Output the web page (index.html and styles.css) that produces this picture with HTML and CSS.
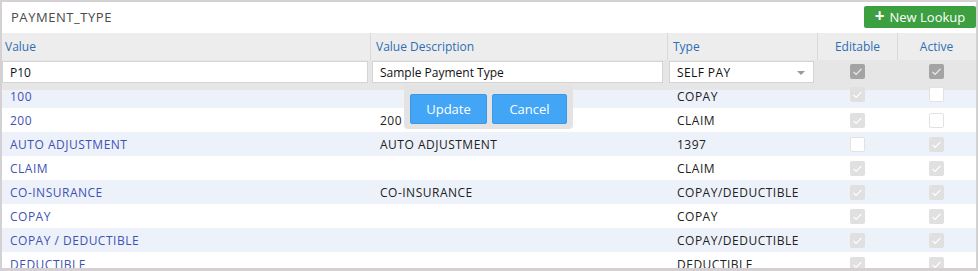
FILE: index.html
```html
<!DOCTYPE html>
<html lang="en">

<head>
    <meta charset="UTF-8">
    <title>Lookups</title>
    <link rel="stylesheet" href="styles.css">
</head>

<body>
    <div class="panel">
        <div class="toolbar">
            <span class="title">PAYMENT_TYPE</span>
            <button class="btn_new"><span class="plus">+</span>New Lookup</button>
        </div>

        <div class="row head">
            <div class="cell">Value</div>
            <div class="cell">Value Description</div>
            <div class="cell">Type</div>
            <div class="cell center">Editable</div>
            <div class="cell center">Active</div>
        </div>

        <div class="row edit">
            <div class="cell"><input class="field" type="text" value="P10"></div>
            <div class="cell"><input class="field" type="text" value="Sample Payment Type"></div>
            <div class="cell"><div class="field select">SELF PAY<span class="caret"></span></div></div>
            <div class="cell center"><span class="chk dark"><svg viewBox="0 0 15 15"><path d="M3.5 7.8l2.6 2.6 5.4-5.6" /></svg></span></div>
            <div class="cell center"><span class="chk dark"><svg viewBox="0 0 15 15"><path d="M3.5 7.8l2.6 2.6 5.4-5.6" /></svg></span></div>
        </div>

        <div class="rows">
            <div class="row data odd first">
                <div class="cell link">100</div>
                <div class="cell"></div>
                <div class="cell">COPAY</div>
                <div class="cell center"><span class="chk on"><svg viewBox="0 0 15 15"><path d="M3.5 7.8l2.6 2.6 5.4-5.6" /></svg></span></div>
                <div class="cell center"><span class="chk off"></span></div>
            </div>
            <div class="row data">
                <div class="cell link">200</div>
                <div class="cell">200</div>
                <div class="cell">CLAIM</div>
                <div class="cell center"><span class="chk on"><svg viewBox="0 0 15 15"><path d="M3.5 7.8l2.6 2.6 5.4-5.6" /></svg></span></div>
                <div class="cell center"><span class="chk off"></span></div>
            </div>
            <div class="row data odd">
                <div class="cell link">AUTO ADJUSTMENT</div>
                <div class="cell">AUTO ADJUSTMENT</div>
                <div class="cell">1397</div>
                <div class="cell center"><span class="chk off"></span></div>
                <div class="cell center"><span class="chk on"><svg viewBox="0 0 15 15"><path d="M3.5 7.8l2.6 2.6 5.4-5.6" /></svg></span></div>
            </div>
            <div class="row data">
                <div class="cell link">CLAIM</div>
                <div class="cell"></div>
                <div class="cell">CLAIM</div>
                <div class="cell center"><span class="chk on"><svg viewBox="0 0 15 15"><path d="M3.5 7.8l2.6 2.6 5.4-5.6" /></svg></span></div>
                <div class="cell center"><span class="chk on"><svg viewBox="0 0 15 15"><path d="M3.5 7.8l2.6 2.6 5.4-5.6" /></svg></span></div>
            </div>
            <div class="row data odd">
                <div class="cell link">CO-INSURANCE</div>
                <div class="cell">CO-INSURANCE</div>
                <div class="cell">COPAY/DEDUCTIBLE</div>
                <div class="cell center"><span class="chk on"><svg viewBox="0 0 15 15"><path d="M3.5 7.8l2.6 2.6 5.4-5.6" /></svg></span></div>
                <div class="cell center"><span class="chk on"><svg viewBox="0 0 15 15"><path d="M3.5 7.8l2.6 2.6 5.4-5.6" /></svg></span></div>
            </div>
            <div class="row data">
                <div class="cell link">COPAY</div>
                <div class="cell"></div>
                <div class="cell">COPAY</div>
                <div class="cell center"><span class="chk on"><svg viewBox="0 0 15 15"><path d="M3.5 7.8l2.6 2.6 5.4-5.6" /></svg></span></div>
                <div class="cell center"><span class="chk on"><svg viewBox="0 0 15 15"><path d="M3.5 7.8l2.6 2.6 5.4-5.6" /></svg></span></div>
            </div>
            <div class="row data odd">
                <div class="cell link">COPAY / DEDUCTIBLE</div>
                <div class="cell"></div>
                <div class="cell">COPAY/DEDUCTIBLE</div>
                <div class="cell center"><span class="chk on"><svg viewBox="0 0 15 15"><path d="M3.5 7.8l2.6 2.6 5.4-5.6" /></svg></span></div>
                <div class="cell center"><span class="chk on"><svg viewBox="0 0 15 15"><path d="M3.5 7.8l2.6 2.6 5.4-5.6" /></svg></span></div>
            </div>
            <div class="row data">
                <div class="cell link">DEDUCTIBLE</div>
                <div class="cell"></div>
                <div class="cell">DEDUCTIBLE</div>
                <div class="cell center"><span class="chk on"><svg viewBox="0 0 15 15"><path d="M3.5 7.8l2.6 2.6 5.4-5.6" /></svg></span></div>
                <div class="cell center"><span class="chk on"><svg viewBox="0 0 15 15"><path d="M3.5 7.8l2.6 2.6 5.4-5.6" /></svg></span></div>
            </div>
        </div>

        <div class="popup">
            <button class="btn_blue">Update</button>
            <button class="btn_blue">Cancel</button>
        </div>
    </div>
</body>

</html>
```

FILE: styles.css
```css
body {
    margin: 0;
    background-color: #ffffff;
    font-family: "Open Sans", "Noto Sans", sans-serif;
    font-size: 12px;
    color: #222222;
}

.panel {
    position: relative;
    width: 978px;
    height: 271px;
    box-sizing: border-box;
    border: 2px solid #d5d0d3;
    border-bottom-width: 3px;
    overflow: hidden;
    background-color: #ffffff;
}

.toolbar {
    height: 31px;
    display: flex;
    align-items: center;
    justify-content: space-between;
}

.title {
    margin-left: 9px;
    margin-top: -2px;
    font-size: 13px;
    letter-spacing: 0.55px;
    color: #4a4a4a;
}

.btn_new {
    height: 22px;
    width: 112px;
    margin-top: -2px;
    border: none;
    border-radius: 2px;
    background-color: #3c9f40;
    color: #ffffff;
    font-family: "Open Sans", sans-serif;
    font-size: 13px;
    padding: 0;
    display: flex;
    align-items: center;
    justify-content: center;
}

.plus {
    font-weight: 700;
    font-size: 17px;
    line-height: 18px;
    margin-right: 5px;
    margin-top: -2px;
}

.row {
    display: grid;
    grid-template-columns: 368px 297px 150px 80px 78px;
}

.cell {
    display: flex;
    align-items: center;
    padding-left: 8px;
    white-space: nowrap;
}

.cell.center {
    justify-content: center;
    padding-left: 0;
}

.head {
    height: 27px;
    background-color: #ededed;
    color: #2f6db5;
}

.head .cell {
    padding-left: 5px;
    border-left: 1px solid #d9d9d9;
}

.head .cell:first-child {
    border-left: none;
    padding-left: 3px;
}

.head .cell.center {
    padding-left: 0;
}

.edit {
    height: 30px;
    background-color: #e6e6e6;
}

.edit .cell {
    padding-left: 0;
    align-items: flex-start;
    padding-top: 1px;
}

.edit .cell.center {
    padding-top: 4px;
}

.field {
    box-sizing: border-box;
    height: 22px;
    border: 1px solid #d4d4d4;
    background-color: #ffffff;
    font-family: "Open Sans", sans-serif;
    font-size: 12px;
    color: #111111;
    padding: 0 0 0 7px;
    outline: none;
}

.edit .cell:nth-child(1) .field {
    width: 366px;
}

.edit .cell:nth-child(2) .field {
    width: 291px;
    margin-left: 2px;
}

.select {
    width: 145px;
    margin-left: 2px;
    display: flex;
    align-items: center;
    position: relative;
    letter-spacing: 0.4px;
}

.caret {
    position: absolute;
    right: 8px;
    top: 9px;
    width: 0;
    height: 0;
    border-left: 4px solid transparent;
    border-right: 4px solid transparent;
    border-top: 4px solid #9a9a9a;
}

.data {
    height: 24px;
    letter-spacing: 0.5px;
}

.data.odd {
    background-color: #edf2fa;
}

.data.first {
    height: 18px;
}

.data.first .cell {
    align-items: flex-start;
    line-height: 14px;
}

.data .cell:nth-child(2),
.data .cell:nth-child(3) {
    padding-left: 10px;
}

.link {
    color: #3f51b5;
}

.chk {
    box-sizing: border-box;
    width: 15px;
    height: 15px;
    border-radius: 2px;
    display: inline-block;
}

.chk svg {
    width: 15px;
    height: 15px;
    display: block;
}

.chk path {
    fill: none;
    stroke: #ffffff;
    stroke-width: 1.2;
}

.chk.on {
    background-color: #e0e0e0;
}

.chk.off {
    background-color: #ffffff;
    border: 1px solid #e2e2e2;
}

.chk.dark {
    background-color: #a4a4a4;
}

.chk.dark path {
    stroke: #eeeeee;
}

.data.first .chk {
    margin-top: -3px;
}

.popup {
    position: absolute;
    left: 402px;
    top: 83px;
    width: 169px;
    height: 44px;
    box-sizing: border-box;
    background-color: #e3e3e3;
    border-radius: 0 0 4px 4px;
    padding: 9px 6px 0 6px;
    display: flex;
    gap: 5px;
}

.btn_blue {
    height: 30px;
    width: 77px;
    border: 1px solid #3a98e6;
    border-radius: 2px;
    background-color: #42a5f5;
    color: #ffffff;
    font-family: "Open Sans", sans-serif;
    font-size: 13px;
    padding: 0;
}

.btn_blue + .btn_blue {
    width: 75px;
}
```
